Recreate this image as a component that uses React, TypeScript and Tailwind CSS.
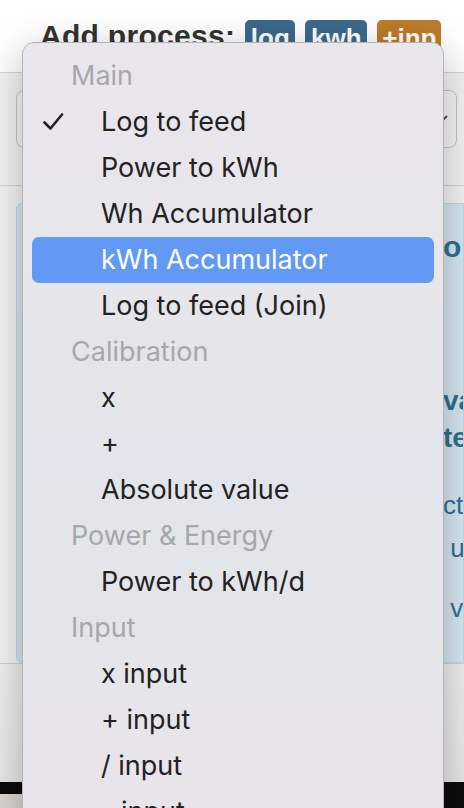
import React from "react";

type Row = { kind: "header" | "item"; label: string; checked?: boolean; active?: boolean };

const rows: Row[] = [
  { kind: "header", label: "Main" },
  { kind: "item", label: "Log to feed", checked: true },
  { kind: "item", label: "Power to kWh" },
  { kind: "item", label: "Wh Accumulator" },
  { kind: "item", label: "kWh Accumulator", active: true },
  { kind: "item", label: "Log to feed (Join)" },
  { kind: "header", label: "Calibration" },
  { kind: "item", label: "x" },
  { kind: "item", label: "+" },
  { kind: "item", label: "Absolute value" },
  { kind: "header", label: "Power & Energy" },
  { kind: "item", label: "Power to kWh/d" },
  { kind: "header", label: "Input" },
  { kind: "item", label: "x input" },
  { kind: "item", label: "+ input" },
  { kind: "item", label: "/ input" },
  { kind: "item", label: "- input" },
  { kind: "item", label: "max input" },
];

function Check() {
  return (
    <svg width="21" height="18" viewBox="0 0 21 18" fill="none">
      <path d="M1.5 9.5 L7.5 15.5 L19 1.5" stroke="#222" strokeWidth="2.6" strokeLinecap="round" strokeLinejoin="round" />
    </svg>
  );
}

export default function App() {
  return (
    <div className="relative w-[464px] h-[808px] overflow-hidden bg-white font-['Liberation_Sans',Arial,sans-serif]">
      {/* background page */}
      <div className="flex flex-col h-full">
        <div className="h-[72px] flex items-start gap-[10px] pl-[40px] pt-[18px] shrink-0">
          <span className="text-[30px] font-bold text-[#333] leading-[36px] tracking-[0.3px]">Add process:</span>
          <span className="mt-[2px] h-[36px] w-[50px] rounded-[5px] bg-[#3c6a8b] text-white font-bold text-[26px] leading-[36px] flex justify-center">log</span>
          <span className="mt-[2px] h-[36px] w-[62px] rounded-[5px] bg-[#3c6a8b] text-white font-bold text-[26px] leading-[36px] flex justify-center">kwh</span>
          <span className="mt-[2px] h-[36px] w-[64px] rounded-[5px] bg-[#bd7b2c] text-white font-bold text-[26px] leading-[36px] flex justify-center">+inp</span>
        </div>
        <div className="border-t border-[#d6d6d6] bg-[#f4f4f4] flex flex-col flex-1">
          <div className="h-[113px] pt-[17px] pl-[16px] pr-[7px] border-b border-[#d4d4d4] shrink-0">
            <div className="h-[58px] rounded-[8px] border border-[#c4c4c4] bg-[#f7f7f7] flex items-center justify-end pr-[8px]">
              <svg width="14" height="9" viewBox="0 0 14 9" fill="none">
                <path d="M1.5 1.5 L7 7 L12.5 1.5" stroke="#444" strokeWidth="1.8" strokeLinecap="round" />
              </svg>
            </div>
          </div>
          <div className="pt-[17px] pl-[16px] shrink-0">
            <div className="h-[460px] border border-[#bcdde9] bg-[#d7e8f1] rounded-l-[6px] flex text-[#31708f]">
              <div className="flex-1" />
              <div className="w-[20px] overflow-hidden whitespace-nowrap flex flex-col">
                <span className="mt-[28px] text-[30px] font-bold leading-none">ons</span>
                <span className="mt-[125px] text-[28px] font-bold leading-none">valu</span>
                <span className="mt-[9px] text-[28px] font-bold leading-none">ter</span>
                <span className="mt-[40px] text-[26px] leading-none">ction</span>
                <span className="mt-[17px] text-[26px] leading-none">{"\u00a0us"}</span>
                <span className="mt-[34px] text-[26px] leading-none">{"\u00a0va"}</span>
              </div>
            </div>
          </div>
          <div className="flex-1 border-t border-[#d2d2d2] bg-[linear-gradient(180deg,#efefef,#e8e8e8)]" />
          <div className="h-[26px] shrink-0 flex">
            <div className="w-[22px] flex flex-col">
              <div className="h-[12px] bg-[#0a0a0a]" />
              <div className="flex-1 bg-[#ddd6d2]" />
            </div>
            <div className="flex-1 bg-[#0d0d0d]" />
          </div>
        </div>
      </div>

      {/* dropdown menu overlay */}
      <div className="absolute left-[22px] top-[42px] w-[422px] h-[800px] rounded-[12px] border border-[#b4b3b8] shadow-[0_10px_40px_rgba(0,0,0,0.28)] bg-[linear-gradient(180deg,#e9e6ec_0%,#e7e6eb_25%,#e2e5eb_50%,#e2e5ea_65%,#e7e5ea_85%,#e9e5ea_100%)] px-[9px] pt-[10px] font-['Inter','Noto_Sans',sans-serif] overflow-hidden">
        <div className="flex flex-col">
          {rows.map((r, i) =>
            r.kind === "header" ? (
              <div key={i} className="h-[46px] flex items-center pl-[39px] text-[27px] text-[#a7a6ab]">
                {r.label}
              </div>
            ) : (
              <div
                key={i}
                className={
                  r.active
                    ? "h-[46px] flex items-center rounded-[7px] bg-[#6199f5] text-white text-[27px]"
                    : "h-[46px] flex items-center text-[#222] text-[27px]"
                }
              >
                <div className="w-[69px] pl-[11px] flex items-center">{r.checked ? <Check /> : null}</div>
                <span>{r.label}</span>
              </div>
            )
          )}
        </div>
      </div>
    </div>
  );
}
